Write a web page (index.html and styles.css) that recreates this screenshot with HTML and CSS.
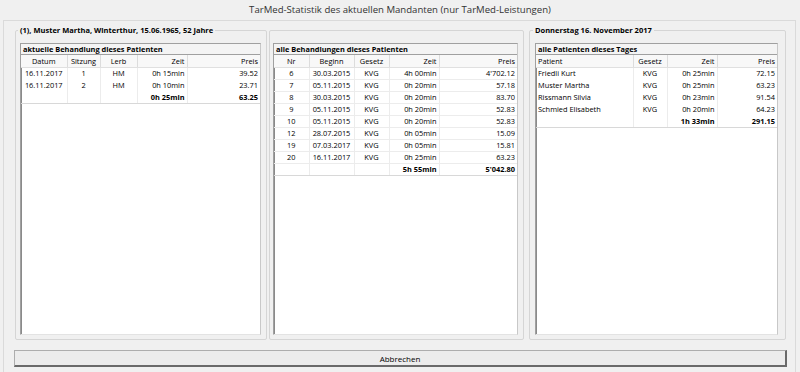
FILE: index.html
```html
<!DOCTYPE html>
<html lang="de">
  <head>
    <meta charset="UTF-8" />
    <title>TarMed-Statistik</title>
    <link rel="stylesheet" href="styles.css">
  </head>
  <body>
    <div class="title">TarMed-Statistik des aktuellen Mandanten (nur TarMed-Leistungen)</div>
    <div class="panel">
      <div class="groups">
        <!-- current patient, current treatment -->
        <fieldset class="group group-patient">
          <legend>(1), Muster Martha, Winterthur, 15.06.1965, 52 Jahre</legend>
          <div class="list">
            <div class="list-title">aktuelle Behandlung dieses Patienten</div>
            <table>
              <tr>
                <th class="w-datum">Datum</th>
                <th class="w-sitzung">Sitzung</th>
                <th class="w-lerb">Lerb</th>
                <th class="w-zeit right">Zeit</th>
                <th class="right">Preis</th>
              </tr>
              <tr><td>16.11.2017</td><td>1</td><td>HM</td><td class="right">0h 15min</td><td class="right">39.52</td></tr>
              <tr><td>16.11.2017</td><td>2</td><td>HM</td><td class="right">0h 10min</td><td class="right">23.71</td></tr>
              <tr class="total"><td></td><td></td><td></td><td class="right">0h 25min</td><td class="right">63.25</td></tr>
            </table>
          </div>
        </fieldset>

        <!-- all treatments of the patient -->
        <fieldset class="group group-history">
          <legend class="legend-empty"></legend>
          <div class="list">
            <div class="list-title">alle Behandlungen dieses Patienten</div>
            <table class="lined">
              <tr>
                <th class="w-nr">Nr</th>
                <th class="w-beginn">Beginn</th>
                <th class="w-gesetz">Gesetz</th>
                <th class="w-zeit right">Zeit</th>
                <th class="right">Preis</th>
              </tr>
              <tr><td>6</td><td>30.03.2015</td><td>KVG</td><td class="right">4h 00min</td><td class="right">4'702.12</td></tr>
              <tr><td>7</td><td>05.11.2015</td><td>KVG</td><td class="right">0h 20min</td><td class="right">57.18</td></tr>
              <tr><td>8</td><td>30.03.2015</td><td>KVG</td><td class="right">0h 20min</td><td class="right">83.70</td></tr>
              <tr><td>9</td><td>05.11.2015</td><td>KVG</td><td class="right">0h 20min</td><td class="right">52.83</td></tr>
              <tr><td>10</td><td>05.11.2015</td><td>KVG</td><td class="right">0h 20min</td><td class="right">52.83</td></tr>
              <tr><td>12</td><td>28.07.2015</td><td>KVG</td><td class="right">0h 05min</td><td class="right">15.09</td></tr>
              <tr><td>19</td><td>07.03.2017</td><td>KVG</td><td class="right">0h 05min</td><td class="right">15.81</td></tr>
              <tr><td>20</td><td>16.11.2017</td><td>KVG</td><td class="right">0h 25min</td><td class="right">63.23</td></tr>
              <tr class="total"><td></td><td></td><td></td><td class="right">5h 55min</td><td class="right">5'042.80</td></tr>
            </table>
          </div>
        </fieldset>

        <!-- all patients of the day -->
        <fieldset class="group group-day">
          <legend>Donnerstag 16. November 2017</legend>
          <div class="list">
            <div class="list-title">alle Patienten dieses Tages</div>
            <table>
              <tr>
                <th class="w-patient left">Patient</th>
                <th class="w-gesetz3">Gesetz</th>
                <th class="w-zeit right">Zeit</th>
                <th class="right">Preis</th>
              </tr>
              <tr><td class="left">Friedli Kurt</td><td>KVG</td><td class="right">0h 25min</td><td class="right">72.15</td></tr>
              <tr><td class="left">Muster Martha</td><td>KVG</td><td class="right">0h 25min</td><td class="right">63.23</td></tr>
              <tr><td class="left">Rissmann Silvia</td><td>KVG</td><td class="right">0h 23min</td><td class="right">91.54</td></tr>
              <tr><td class="left">Schmied Elisabeth</td><td>KVG</td><td class="right">0h 20min</td><td class="right">64.23</td></tr>
              <tr class="total"><td></td><td></td><td class="right">1h 33min</td><td class="right">291.15</td></tr>
            </table>
          </div>
        </fieldset>
      </div>

      <button class="btn-cancel">Abbrechen</button>
    </div>
  </body>
</html>
```

FILE: styles.css
```css
* {
  box-sizing: border-box;
}

body {
  margin: 0;
  background-color: #f0f0f0;
  font-family: "Open Sans", "Noto Sans", sans-serif;
  font-size: 7.4px;
  color: #000;
}

/* HEADER */
.title {
  height: 20px;
  line-height: 20px;
  text-align: center;
  font-size: 9.6px;
  color: #333;
}

/* LAYOUT */
.panel {
  height: 352px;
  margin: 0 4px 0 3px;
  padding: 3px 9px 0 11px;
  border: 1px solid #dadada;
  border-bottom: none;
}

.groups {
  display: flex;
}

.group {
  height: 316px;
  margin: 0;
  min-width: 0;
  padding: 6px 5px 3px 4px;
  border: 1px solid #d5d5d5;
  border-radius: 2px;
}

.group-patient {
  width: 252px;
}

.group-history {
  width: 255px;
  margin-left: 2px;
  padding-left: 3px;
}

.group-day {
  width: 257px;
  margin-left: 5px;
  padding-left: 5px;
  padding-right: 7px;
}

legend {
  height: 13px;
  line-height: 13px;
  margin-left: -2px;
  padding: 0 2px;
  font-size: 7.5px;
  font-weight: bold;
}

.legend-empty {
  padding: 0;
}

/* LISTS */
.list {
  height: 292px;
  background: #fff;
  border: 1px solid #a0a0a0;
  border-right-color: #c8c8c8;
  border-bottom-color: #e3e3e3;
  box-shadow: inset 1px 0 0 #8a8a8a;
}

.list-title {
  height: 11px;
  line-height: 10px;
  padding-left: 2px;
  font-weight: bold;
  background: #f4f4f4;
  border-bottom: 1px solid #a0a0a0;
}

table {
  width: 100%;
  table-layout: fixed;
  border-collapse: collapse;
}

tr {
  height: 12px;
}

th,
td {
  height: 12px;
  padding: 0 2px;
  line-height: 10px;
  text-align: center;
  vertical-align: middle;
  white-space: nowrap;
  overflow: hidden;
  border-right: 1px solid #ececec;
}

th {
  height: 11px;
  font-weight: normal;
  background: #f8f8f8;
  border-right: 1px solid #dcdcdc;
  border-bottom: 1px solid #e0e0e0;
}

th:last-child,
td:last-child {
  border-right: none;
}

.lined td {
  border-bottom: 1px solid #ececec;
}

.total td {
  font-weight: bold;
  border-bottom: 1px solid #d8d8d8;
}

.left {
  text-align: left;
}

.right {
  text-align: right;
}

/* column widths */
.w-datum { width: 46px; }
.w-sitzung { width: 33px; }
.w-lerb { width: 37px; }
.w-zeit { width: 50px; }
.w-nr { width: 35px; }
.w-beginn { width: 45px; }
.w-gesetz { width: 35px; }
.w-patient { width: 97px; }
.w-gesetz3 { width: 34px; }

/* BUTTON */
.btn-cancel {
  display: block;
  width: 773px;
  height: 17px;
  margin: 10px 0 0 -1px;
  padding: 0;
  font-family: inherit;
  font-size: 8px;
  color: #000;
  background: #ececec;
  border: 1px solid #adadad;
  border-right: 2px solid #6a6a6a;
  border-bottom: 2px solid #6a6a6a;
}
```
